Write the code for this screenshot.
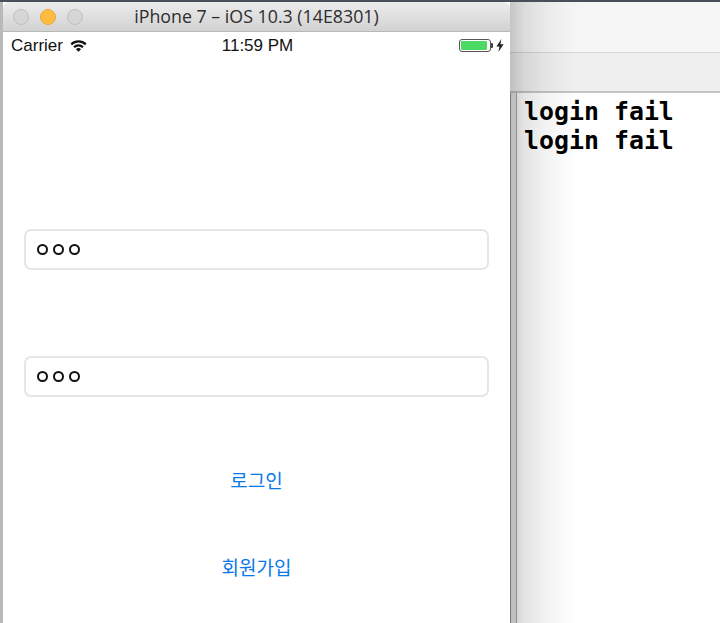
<style>
:global(body){margin:0;background:#fff}
.desk{position:relative;width:720px;height:623px;overflow:hidden;background:#fff;font-family:"Liberation Sans",Arial,sans-serif}
.back{position:absolute;inset:0;display:flex;flex-direction:column;border-top:2px solid #4a5058}
.tool1{height:50px;background:#f6f6f6;border-bottom:1px solid #d6d6d6}
.tool2{height:38px;background:#f0f0f0;border-bottom:2px solid #c4c4c4}
.body{flex:1;display:flex;justify-content:flex-end}
.divider{width:7px;background:#e9e9e9;border-left:1px solid #9a9a9a;border-right:1px solid #a8a8a8;box-sizing:border-box}
.console{width:203px;padding:5px 0 0 7px;box-sizing:border-box;background:#fff;font:700 24.9px/28.5px "DejaVu Sans Mono","Liberation Mono",monospace;color:#000}
.shadow{position:absolute;left:510px;top:2px;width:70px;bottom:0;background:linear-gradient(90deg,rgba(0,0,0,.2),rgba(0,0,0,.11) 20%,rgba(0,0,0,.05) 50%,rgba(0,0,0,.015) 80%,rgba(0,0,0,0));pointer-events:none}
.sim{position:absolute;left:0;top:2px;width:510px;height:621px;display:flex;flex-direction:column;background:#fff;border-left:3px solid #b9b9b9;box-sizing:border-box}
.title{height:29px;flex:none;background:linear-gradient(#ececec,#d2d2d2);border-bottom:1px solid #b8b8b8;border-radius:6px 6px 0 0;display:flex;align-items:center;position:relative}
.lights{display:flex;gap:11px;padding-left:10px}
.l{width:16px;height:16px;border-radius:50%;background:#d6d6d6;border:1px solid #bfbfbf;box-sizing:border-box}
.l.y{background:#fdbc40;border-color:#eaa937}
.ttl{position:absolute;left:0;right:0;text-align:center;font:17.8px/29px "Open Sans","Liberation Sans",sans-serif;color:#2e2e2e}
.status{height:27px;flex:none;display:grid;grid-template-columns:1fr auto 1fr;align-items:center;padding:0 6px 0 8px;font:17px/27px "Liberation Sans",Arial,sans-serif;color:#111}
.st-l{display:flex;align-items:center;gap:7px}
.st-r{display:flex;justify-content:flex-end;align-items:center;gap:5px}
.batt{width:32px;height:13px;border:1px solid #555;border-radius:3px;box-sizing:border-box;padding:1px;position:relative}
.batt i{display:block;height:100%;width:26px;background:#4cd964;border-radius:1px}
.batt::after{content:"";position:absolute;right:-3px;top:3px;width:2px;height:5px;background:#444;border-radius:0 1px 1px 0}
.content{flex:1;display:flex;flex-direction:column;padding:0 21px;align-items:stretch}
.field{height:41px;border:2px solid #e6e6e6;border-radius:7px;box-sizing:border-box;display:flex;align-items:center;padding-left:11px;gap:5px}
.field i{width:11px;height:11px;border:2px solid #111;border-radius:50%;box-sizing:border-box}
.f1{margin-top:170px}
.f2{margin-top:86px}
.link{color:#0a78e8;text-align:center;font:19px/24px "Noto Sans CJK KR",sans-serif}
.l1{margin-top:71px}
.l2{margin-top:63px}
</style>

<div class="desk">
  <div class="back">
    <div class="tool1"></div>
    <div class="tool2"></div>
    <div class="body">
      <div class="divider"></div>
      <div class="console"><div>login fail</div><div>login fail</div></div>
    </div>
  </div>
  <div class="shadow"></div>
  <div class="sim">
    <div class="title">
      <div class="lights"><span class="l"></span><span class="l y"></span><span class="l"></span></div>
      <div class="ttl">iPhone 7 – iOS 10.3 (14E8301)</div>
    </div>
    <div class="status">
      <div class="st-l"><span>Carrier</span>
        <svg width="17" height="13" viewBox="0 0 17 13"><path d="M0.5 4.5A11.5 11.5 0 0 1 16.5 4.5L15 6.2A9.3 9.3 0 0 0 2 6.2Z M3.3 7.4A7.4 7.4 0 0 1 13.7 7.4L12.2 9A5.2 5.2 0 0 0 4.8 9Z M6 10.2A3.4 3.4 0 0 1 11 10.2L8.5 12.8Z" fill="#111"/></svg>
      </div>
      <div class="time">11:59 PM</div>
      <div class="st-r"><div class="batt"><i></i></div>
        <svg width="8" height="13" viewBox="0 0 8 13"><path d="M5.4 0 0.4 7.5H3.4L2.4 13 7.6 5.3H4.4Z" fill="#222"/></svg>
      </div>
    </div>
    <div class="content">
      <div class="field f1"><i></i><i></i><i></i></div>
      <div class="field f2"><i></i><i></i><i></i></div>
      <div class="link l1">로그인</div>
      <div class="link l2">회원가입</div>
    </div>
  </div>
</div>
